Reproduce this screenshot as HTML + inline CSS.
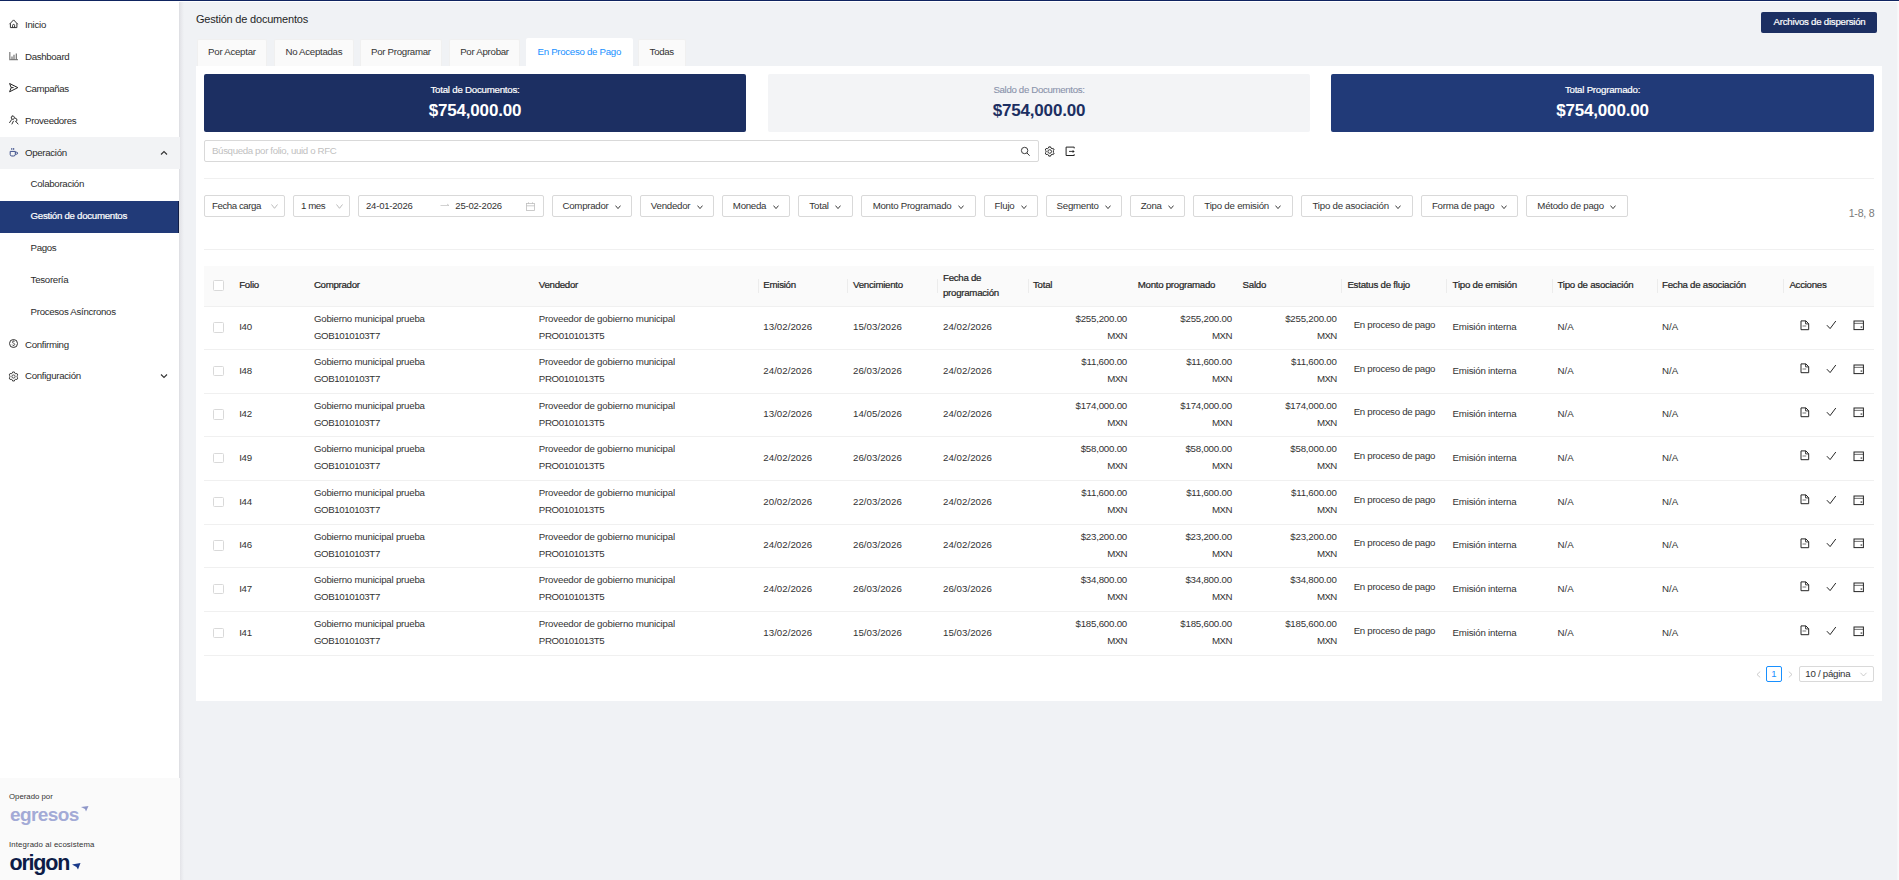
<!DOCTYPE html>
<html lang="es"><head><meta charset="utf-8"><title>Gestión de documentos</title>
<style>
html,body{margin:0;padding:0;}
body{width:1899px;height:880px;overflow:hidden;position:relative;background:#f0f2f5;font-family:"Liberation Sans",sans-serif;}
.b{position:absolute;}
.t{position:absolute;white-space:nowrap;}
.fl{display:flex;justify-content:center;align-items:flex-start;}
svg.b{overflow:visible;}
</style></head><body>
<div class="b" style="left:0px;top:0px;width:1899px;height:880px;background:#f0f2f5"></div>
<div class="b" style="left:0px;top:0px;width:179px;height:880px;background:#ffffff"></div>
<div class="b" style="left:179px;top:0px;width:5px;height:880px;background:linear-gradient(to right,#dcdde1,#e6e7eb 35%,#f0f2f5)"></div>
<div class="b" style="left:0px;top:778px;width:179.5px;height:102px;background:#fafafa"></div>
<div class="b" style="left:1897px;top:0px;width:2px;height:880px;background:linear-gradient(to right,#f4f5f7,#fbfbfc)"></div>
<div class="b" style="left:179px;top:1px;width:1720px;height:1px;background:#ffffff"></div>
<div class="b" style="left:0px;top:0px;width:1899px;height:1px;background:#0f2460"></div>
<div class="b" style="left:0px;top:137px;width:179.5px;height:32px;background:#f2f3f5"></div>
<div class="b" style="left:0px;top:201px;width:179px;height:32px;background:#213a78;border-right:1.5px solid #111d45;box-sizing:border-box"></div>
<div class="t " style="left:25px;top:17.60px;height:14px;line-height:14px;font-size:9.7px;font-weight:400;color:#2b2b2b;letter-spacing:-0.245px;">Inicio</div>
<div class="t " style="left:25px;top:49.60px;height:14px;line-height:14px;font-size:9.7px;font-weight:400;color:#2b2b2b;letter-spacing:-0.343px;">Dashboard</div>
<div class="t " style="left:25px;top:81.50px;height:14px;line-height:14px;font-size:9.7px;font-weight:400;color:#2b2b2b;letter-spacing:-0.381px;">Campañas</div>
<div class="t " style="left:25px;top:113.50px;height:14px;line-height:14px;font-size:9.7px;font-weight:400;color:#2b2b2b;letter-spacing:-0.325px;">Proveedores</div>
<div class="t " style="left:25px;top:145.50px;height:14px;line-height:14px;font-size:9.7px;font-weight:400;color:#2b2b2b;letter-spacing:-0.323px;">Operación</div>
<div class="t " style="left:30.6px;top:177.40px;height:14px;line-height:14px;font-size:9.7px;font-weight:400;color:#2b2b2b;letter-spacing:-0.31px;">Colaboración</div>
<div class="t " style="left:30.6px;top:241.40px;height:14px;line-height:14px;font-size:9.7px;font-weight:400;color:#2b2b2b;letter-spacing:-0.358px;">Pagos</div>
<div class="t " style="left:30.6px;top:273.40px;height:14px;line-height:14px;font-size:9.7px;font-weight:400;color:#2b2b2b;letter-spacing:-0.292px;">Tesorería</div>
<div class="t " style="left:30.6px;top:305.40px;height:14px;line-height:14px;font-size:9.7px;font-weight:400;color:#2b2b2b;letter-spacing:-0.312px;">Procesos Asíncronos</div>
<div class="t " style="left:25px;top:337.60px;height:14px;line-height:14px;font-size:9.7px;font-weight:400;color:#2b2b2b;letter-spacing:-0.305px;">Confirming</div>
<div class="t " style="left:25px;top:368.80px;height:14px;line-height:14px;font-size:9.7px;font-weight:400;color:#2b2b2b;letter-spacing:-0.299px;">Configuración</div>
<div class="t " style="left:30.6px;top:209.40px;height:14px;line-height:14px;font-size:9.7px;font-weight:400;color:#ffffff;letter-spacing:-0.283px;-webkit-text-stroke:0.2px #fff;">Gestión de documentos</div>
<svg class="b" style="left:9px;top:19px;color:#333" width="10" height="10" viewBox="0 0 10 10" fill="none" stroke="currentColor"><path d="M0.5 5.2 L4.6 0.9 L8.7 5.2 M1.4 4.4 V8.6 H7.9 V4.4 M3.6 8.6 V6.3 Q3.6 5.4 4.6 5.4 Q5.6 5.4 5.6 6.3 V8.6" stroke-width="1"/></svg>
<svg class="b" style="left:9px;top:51px;color:#333" width="10" height="10" viewBox="0 0 10 10" fill="none" stroke="currentColor"><path d="M0.8 1 V8.6 H9" stroke-width="1.3" style="opacity:.6"/><path d="M3 8.3 V5.6 M5 8.3 V3.8 M7.3 8.3 V2.6" stroke-width="1.1" style="opacity:.75"/></svg>
<svg class="b" style="left:9px;top:83px;color:#222" width="10" height="10" viewBox="0 0 10 10" fill="none" stroke="currentColor"><path d="M0.6 0.5 L8.8 4.6 L0.6 8.8 L2.2 4.6 Z M2.2 4.6 H4.6" stroke-width="1" stroke-linejoin="round"/></svg>
<svg class="b" style="left:9px;top:115px;color:#333" width="10" height="10" viewBox="0 0 10 10" fill="none" stroke="currentColor"><path d="M3.2 1 Q5 0.6 5.4 2.2 Q5.6 3.6 4.4 4.3 M3.2 1 Q1.8 1.6 2.3 3.2 Q2.7 4.2 3.8 4.4 M2.6 4.6 L0.6 7.6 M5.8 3 Q8 3.2 8 5 Q8 6 7 6.4 M4.4 6.2 L3 9 M6.6 6.2 L9 9" stroke-width="1" stroke-linecap="round"/></svg>
<svg class="b" style="left:9px;top:147px;color:#3d4f8a" width="10" height="10" viewBox="0 0 10 10" fill="none" stroke="currentColor"><path d="M1.2 4.4 H6.3 V7.4 Q6.3 9 4.7 9 H2.8 Q1.2 9 1.2 7.4 Z M6.3 5.2 H7.6 Q8.6 5.2 8.6 6.2 Q8.6 7.2 7.6 7.2 H6.3 M2.8 1 V2.9 M4.7 1 V2.9" stroke-width="1"/></svg>
<svg class="b" style="left:9px;top:339px;color:#333" width="10" height="10" viewBox="0 0 10 10" fill="none" stroke="currentColor"><circle cx="4.5" cy="4.5" r="4" stroke-width="1"/><path d="M5.6 2.8 Q5.3 2.2 4.5 2.2 Q3.4 2.2 3.4 3.1 Q3.4 3.9 4.5 4.2 Q5.7 4.5 5.7 5.4 Q5.7 6.4 4.5 6.4 Q3.5 6.4 3.2 5.7 M4.5 1.5 V2.2 M4.5 6.4 V7.2" stroke-width="0.8"/></svg>
<svg class="b" style="left:7.8px;top:371px;color:#3a3a3a" width="11" height="11" viewBox="0 0 11 11" fill="none" stroke="currentColor"><path d="M4.35 2.09 L4.59 0.99 L6.41 0.99 L6.65 2.09 L7.88 2.80 L8.95 2.46 L9.86 4.03 L9.03 4.79 L9.03 6.21 L9.86 6.97 L8.95 8.54 L7.88 8.20 L6.65 8.91 L6.41 10.01 L4.59 10.01 L4.35 8.91 L3.12 8.20 L2.05 8.54 L1.14 6.97 L1.97 6.21 L1.97 4.79 L1.14 4.03 L2.05 2.46 L3.12 2.80 Z" stroke-width="0.95" stroke-linejoin="round"/><circle cx="5.5" cy="5.5" r="1.6" stroke-width="0.9"/></svg>
<svg class="b" style="left:160px;top:150px;color:#333" width="8" height="6" viewBox="0 0 8 6" fill="none" stroke="currentColor"><path d="M1 4.5 L4 1.5 L7 4.5" stroke-width="1.1"/></svg>
<svg class="b" style="left:160px;top:373px;color:#333" width="8" height="6" viewBox="0 0 8 6" fill="none" stroke="currentColor"><path d="M1 1.5 L4 4.5 L7 1.5" stroke-width="1.1"/></svg>
<div class="t " style="left:9px;top:792.20px;height:10px;line-height:10px;font-size:7.8px;font-weight:400;color:#333;letter-spacing:0px;">Operado por</div>
<div class="t " style="left:9px;top:840.20px;height:10px;line-height:10px;font-size:7.8px;font-weight:400;color:#333;letter-spacing:0.12px;">Integrado al ecosistema</div>
<div class="t " style="left:10px;top:804.00px;height:22px;line-height:22px;font-size:19px;font-weight:700;color:#a3aad6;letter-spacing:-0.6px;font-family:"Liberation Sans",sans-serif;">egresos</div>
<svg class="b" style="left:81px;top:806px;" width="8" height="6" viewBox="0 0 8 6" fill="none" stroke="currentColor"><path d="M0 1 L7.5 0 L5 5.5 L4 3 Z" fill="#8d95c8" stroke="none"/></svg>
<div class="t " style="left:9.5px;top:850.70px;height:24px;line-height:24px;font-size:21.5px;font-weight:700;color:#0d1c47;letter-spacing:-1.2px;">origon</div>
<svg class="b" style="left:72px;top:863px;" width="9" height="7" viewBox="0 0 9 7" fill="none" stroke="currentColor"><path d="M0 1.5 L8.5 0 L6 6.5 L4.5 4 Z" fill="#1a3a8a" stroke="none"/></svg>
<div class="t " style="left:196px;top:10.50px;height:16px;line-height:16px;font-size:11px;font-weight:400;color:#1f1f1f;letter-spacing:-0.2px;">Gestión de documentos</div>
<div class="b" style="left:1761px;top:12px;width:116px;height:21px;background:#1c2f62;border-radius:2px"></div>
<div class="t" style="left:1519.5px;width:600px;text-align:center;top:14.50px;height:14px;line-height:14px;font-size:9.7px;font-weight:400;color:#fff;letter-spacing:-0.257px;-webkit-text-stroke:0.2px #fff;">Archivos de dispersión</div>
<div class="b" style="left:197px;top:38.6px;width:69.80000000000001px;height:27.4px;background:#fafafa;border:1px solid #f0f0f0;border-bottom:none;box-sizing:border-box;border-radius:2px 2px 0 0"></div>
<div class="t" style="left:-68.1px;width:600px;text-align:center;top:44.60px;height:14px;line-height:14px;font-size:9.7px;font-weight:400;color:#333;letter-spacing:-0.276px;">Por Aceptar</div>
<div class="b" style="left:273.7px;top:38.6px;width:80.30000000000001px;height:27.4px;background:#fafafa;border:1px solid #f0f0f0;border-bottom:none;box-sizing:border-box;border-radius:2px 2px 0 0"></div>
<div class="t" style="left:13.850000000000023px;width:600px;text-align:center;top:44.60px;height:14px;line-height:14px;font-size:9.7px;font-weight:400;color:#333;letter-spacing:-0.302px;">No Aceptadas</div>
<div class="b" style="left:359.8px;top:38.6px;width:82.19999999999999px;height:27.4px;background:#fafafa;border:1px solid #f0f0f0;border-bottom:none;box-sizing:border-box;border-radius:2px 2px 0 0"></div>
<div class="t" style="left:100.89999999999998px;width:600px;text-align:center;top:44.60px;height:14px;line-height:14px;font-size:9.7px;font-weight:400;color:#333;letter-spacing:-0.294px;">Por Programar</div>
<div class="b" style="left:449px;top:38.6px;width:71px;height:27.4px;background:#fafafa;border:1px solid #f0f0f0;border-bottom:none;box-sizing:border-box;border-radius:2px 2px 0 0"></div>
<div class="t" style="left:184.5px;width:600px;text-align:center;top:44.60px;height:14px;line-height:14px;font-size:9.7px;font-weight:400;color:#333;letter-spacing:-0.282px;">Por Aprobar</div>
<div class="b" style="left:526px;top:38px;width:106.5px;height:28px;background:#fff;border-radius:2px 2px 0 0"></div>
<div class="t" style="left:279.25px;width:600px;text-align:center;top:44.60px;height:14px;line-height:14px;font-size:9.7px;font-weight:400;color:#1890ff;letter-spacing:-0.297px;">En Proceso de Pago</div>
<div class="b" style="left:638px;top:38.6px;width:47.5px;height:27.4px;background:#fafafa;border:1px solid #f0f0f0;border-bottom:none;box-sizing:border-box;border-radius:2px 2px 0 0"></div>
<div class="t" style="left:361.75px;width:600px;text-align:center;top:44.60px;height:14px;line-height:14px;font-size:9.7px;font-weight:400;color:#333;letter-spacing:-0.311px;">Todas</div>
<div class="b" style="left:196px;top:66px;width:1686px;height:635px;background:#fff"></div>
<div class="b" style="left:204px;top:74px;width:542px;height:58px;background:#1c2f62;border-radius:2px"></div>
<div class="t" style="left:175px;width:600px;text-align:center;top:82.80px;height:14px;line-height:14px;font-size:9.7px;font-weight:400;color:#fff;letter-spacing:-0.235px;-webkit-text-stroke:0.2px #fff;">Total de Documentos:</div>
<div class="t" style="left:175px;width:600px;text-align:center;top:99.80px;height:22px;line-height:22px;font-size:17px;font-weight:700;color:#fff;letter-spacing:-0.2px;">$754,000.00</div>
<div class="b" style="left:768px;top:74px;width:542px;height:58px;background:#f3f4f6;border-radius:2px"></div>
<div class="t" style="left:739px;width:600px;text-align:center;top:82.80px;height:14px;line-height:14px;font-size:9.7px;font-weight:400;color:#8a93ab;letter-spacing:-0.343px;-webkit-text-stroke:0.1px #8a93ab;">Saldo de Documentos:</div>
<div class="t" style="left:739px;width:600px;text-align:center;top:99.80px;height:22px;line-height:22px;font-size:17px;font-weight:700;color:#1c2f62;letter-spacing:-0.2px;">$754,000.00</div>
<div class="b" style="left:1331px;top:74px;width:543px;height:58px;background:#213a78;border-radius:2px"></div>
<div class="t" style="left:1302.5px;width:600px;text-align:center;top:82.80px;height:14px;line-height:14px;font-size:9.7px;font-weight:400;color:#fff;letter-spacing:-0.233px;-webkit-text-stroke:0.2px #fff;">Total Programado:</div>
<div class="t" style="left:1302.5px;width:600px;text-align:center;top:99.80px;height:22px;line-height:22px;font-size:17px;font-weight:700;color:#fff;letter-spacing:-0.2px;">$754,000.00</div>
<div class="b" style="left:204px;top:140px;width:835px;height:22px;border:1px solid #d9d9d9;border-radius:2px;box-sizing:border-box;background:#fff"></div>
<div class="t " style="left:212px;top:143.50px;height:14px;line-height:14px;font-size:9.7px;font-weight:400;color:#bfbfbf;letter-spacing:-0.361px;">Búsqueda por folio, uuid o RFC</div>
<svg class="b" style="left:1020px;top:146px;color:#333" width="11" height="11" viewBox="0 0 11 11" fill="none" stroke="currentColor"><circle cx="4.6" cy="4.5" r="3.2" stroke-width="0.95"/><path d="M6.9 6.9 L9.6 9.7" stroke-width="1"/></svg>
<svg class="b" style="left:1043.5px;top:145.5px;color:#2a2a2a" width="11" height="11" viewBox="0 0 11 11" fill="none" stroke="currentColor"><path d="M4.52 1.99 L4.77 0.89 L6.63 0.89 L6.88 1.99 L8.15 2.72 L9.23 2.39 L10.15 4.00 L9.33 4.77 L9.33 6.23 L10.15 7.00 L9.23 8.61 L8.15 8.28 L6.88 9.01 L6.63 10.11 L4.77 10.11 L4.52 9.01 L3.25 8.28 L2.17 8.61 L1.25 7.00 L2.07 6.23 L2.07 4.77 L1.25 4.00 L2.17 2.39 L3.25 2.72 Z" stroke-width="1" stroke-linejoin="round"/><circle cx="5.7" cy="5.5" r="1.8" stroke-width="0.95"/></svg>
<svg class="b" style="left:1065px;top:146px;color:#222" width="11" height="11" viewBox="0 0 11 11" fill="none" stroke="currentColor"><path d="M9.2 2.4 V1.1 H1.1 V9.5 H9.2 V8.2" stroke-width="1"/><path d="M4 5.4 H9" stroke-width="0.9"/><path d="M7.6 3.9 L9.7 5.4 L7.6 6.9 Z" fill="currentColor" stroke="none"/></svg>
<div class="b" style="left:204px;top:178px;width:1670px;height:1px;background:#f0f0f0"></div>
<div class="b" style="left:204px;top:249px;width:1670px;height:1px;background:#f0f0f0"></div>
<div class="b" style="left:204px;top:195px;width:81px;height:22px;border:1px solid #d9d9d9;border-radius:2px;box-sizing:border-box;background:#fff"></div>
<div class="t " style="left:212px;top:198.60px;height:14px;line-height:14px;font-size:9.7px;font-weight:400;color:#333;letter-spacing:-0.441px;">Fecha carga</div>
<svg class="b" style="left:271px;top:203.6px;color:#b0b0b0" width="7" height="5" viewBox="0 0 7 5" fill="none" stroke="currentColor"><path d="M0.5 0.5 L3.5 4.3 L6.5 0.5" stroke-width="0.85"/></svg>
<div class="b" style="left:293px;top:195px;width:57px;height:22px;border:1px solid #d9d9d9;border-radius:2px;box-sizing:border-box;background:#fff"></div>
<div class="t " style="left:301px;top:198.60px;height:14px;line-height:14px;font-size:9.7px;font-weight:400;color:#333;letter-spacing:-0.475px;">1 mes</div>
<svg class="b" style="left:336px;top:203.6px;color:#b0b0b0" width="7" height="5" viewBox="0 0 7 5" fill="none" stroke="currentColor"><path d="M0.5 0.5 L3.5 4.3 L6.5 0.5" stroke-width="0.85"/></svg>
<div class="b" style="left:552px;top:195px;width:79.5px;height:22px;border:1px solid #d9d9d9;border-radius:2px;box-sizing:border-box;background:#fff"></div>
<div class="b fl" style="left:552px;top:198.6px;width:79.5px;height:14px;"><span style="font-size:9.7px;letter-spacing:-0.27px;color:#333;line-height:14px">Comprador</span><svg width="6" height="5" viewBox="0 0 6 5" fill="none" stroke="#333" style="margin-left:6.5px;margin-top:6px"><path d="M0.5 0.6 L3 3.6 L5.5 0.6" stroke-width="0.95"/></svg></div>
<div class="b" style="left:640px;top:195px;width:73.60000000000002px;height:22px;border:1px solid #d9d9d9;border-radius:2px;box-sizing:border-box;background:#fff"></div>
<div class="b fl" style="left:640px;top:198.6px;width:73.60000000000002px;height:14px;"><span style="font-size:9.7px;letter-spacing:-0.26px;color:#333;line-height:14px">Vendedor</span><svg width="6" height="5" viewBox="0 0 6 5" fill="none" stroke="#333" style="margin-left:6.5px;margin-top:6px"><path d="M0.5 0.6 L3 3.6 L5.5 0.6" stroke-width="0.95"/></svg></div>
<div class="b" style="left:722px;top:195px;width:67.5px;height:22px;border:1px solid #d9d9d9;border-radius:2px;box-sizing:border-box;background:#fff"></div>
<div class="b fl" style="left:722px;top:198.6px;width:67.5px;height:14px;"><span style="font-size:9.7px;letter-spacing:-0.292px;color:#333;line-height:14px">Moneda</span><svg width="6" height="5" viewBox="0 0 6 5" fill="none" stroke="#333" style="margin-left:6.5px;margin-top:6px"><path d="M0.5 0.6 L3 3.6 L5.5 0.6" stroke-width="0.95"/></svg></div>
<div class="b" style="left:798px;top:195px;width:54.60000000000002px;height:22px;border:1px solid #d9d9d9;border-radius:2px;box-sizing:border-box;background:#fff"></div>
<div class="b fl" style="left:798px;top:198.6px;width:54.60000000000002px;height:14px;"><span style="font-size:9.7px;letter-spacing:-0.205px;color:#333;line-height:14px">Total</span><svg width="6" height="5" viewBox="0 0 6 5" fill="none" stroke="#333" style="margin-left:6.5px;margin-top:6px"><path d="M0.5 0.6 L3 3.6 L5.5 0.6" stroke-width="0.95"/></svg></div>
<div class="b" style="left:861px;top:195px;width:114.60000000000002px;height:22px;border:1px solid #d9d9d9;border-radius:2px;box-sizing:border-box;background:#fff"></div>
<div class="b fl" style="left:861px;top:198.6px;width:114.60000000000002px;height:14px;"><span style="font-size:9.7px;letter-spacing:-0.259px;color:#333;line-height:14px">Monto Programado</span><svg width="6" height="5" viewBox="0 0 6 5" fill="none" stroke="#333" style="margin-left:6.5px;margin-top:6px"><path d="M0.5 0.6 L3 3.6 L5.5 0.6" stroke-width="0.95"/></svg></div>
<div class="b" style="left:984px;top:195px;width:53.59999999999991px;height:22px;border:1px solid #d9d9d9;border-radius:2px;box-sizing:border-box;background:#fff"></div>
<div class="b fl" style="left:984px;top:198.6px;width:53.59999999999991px;height:14px;"><span style="font-size:9.7px;letter-spacing:-0.21px;color:#333;line-height:14px">Flujo</span><svg width="6" height="5" viewBox="0 0 6 5" fill="none" stroke="#333" style="margin-left:6.5px;margin-top:6px"><path d="M0.5 0.6 L3 3.6 L5.5 0.6" stroke-width="0.95"/></svg></div>
<div class="b" style="left:1046px;top:195px;width:75.70000000000005px;height:22px;border:1px solid #d9d9d9;border-radius:2px;box-sizing:border-box;background:#fff"></div>
<div class="b fl" style="left:1046px;top:198.6px;width:75.70000000000005px;height:14px;"><span style="font-size:9.7px;letter-spacing:-0.276px;color:#333;line-height:14px">Segmento</span><svg width="6" height="5" viewBox="0 0 6 5" fill="none" stroke="#333" style="margin-left:6.5px;margin-top:6px"><path d="M0.5 0.6 L3 3.6 L5.5 0.6" stroke-width="0.95"/></svg></div>
<div class="b" style="left:1130px;top:195px;width:54.799999999999955px;height:22px;border:1px solid #d9d9d9;border-radius:2px;box-sizing:border-box;background:#fff"></div>
<div class="b fl" style="left:1130px;top:198.6px;width:54.799999999999955px;height:14px;"><span style="font-size:9.7px;letter-spacing:-0.276px;color:#333;line-height:14px">Zona</span><svg width="6" height="5" viewBox="0 0 6 5" fill="none" stroke="#333" style="margin-left:6.5px;margin-top:6px"><path d="M0.5 0.6 L3 3.6 L5.5 0.6" stroke-width="0.95"/></svg></div>
<div class="b" style="left:1193px;top:195px;width:99.79999999999995px;height:22px;border:1px solid #d9d9d9;border-radius:2px;box-sizing:border-box;background:#fff"></div>
<div class="b fl" style="left:1193px;top:198.6px;width:99.79999999999995px;height:14px;"><span style="font-size:9.7px;letter-spacing:-0.227px;color:#333;line-height:14px">Tipo de emisión</span><svg width="6" height="5" viewBox="0 0 6 5" fill="none" stroke="#333" style="margin-left:6.5px;margin-top:6px"><path d="M0.5 0.6 L3 3.6 L5.5 0.6" stroke-width="0.95"/></svg></div>
<div class="b" style="left:1301px;top:195px;width:111.79999999999995px;height:22px;border:1px solid #d9d9d9;border-radius:2px;box-sizing:border-box;background:#fff"></div>
<div class="b fl" style="left:1301px;top:198.6px;width:111.79999999999995px;height:14px;"><span style="font-size:9.7px;letter-spacing:-0.224px;color:#333;line-height:14px">Tipo de asociación</span><svg width="6" height="5" viewBox="0 0 6 5" fill="none" stroke="#333" style="margin-left:6.5px;margin-top:6px"><path d="M0.5 0.6 L3 3.6 L5.5 0.6" stroke-width="0.95"/></svg></div>
<div class="b" style="left:1421px;top:195px;width:96.70000000000005px;height:22px;border:1px solid #d9d9d9;border-radius:2px;box-sizing:border-box;background:#fff"></div>
<div class="b fl" style="left:1421px;top:198.6px;width:96.70000000000005px;height:14px;"><span style="font-size:9.7px;letter-spacing:-0.253px;color:#333;line-height:14px">Forma de pago</span><svg width="6" height="5" viewBox="0 0 6 5" fill="none" stroke="#333" style="margin-left:6.5px;margin-top:6px"><path d="M0.5 0.6 L3 3.6 L5.5 0.6" stroke-width="0.95"/></svg></div>
<div class="b" style="left:1526px;top:195px;width:101.70000000000005px;height:22px;border:1px solid #d9d9d9;border-radius:2px;box-sizing:border-box;background:#fff"></div>
<div class="b fl" style="left:1526px;top:198.6px;width:101.70000000000005px;height:14px;"><span style="font-size:9.7px;letter-spacing:-0.25px;color:#333;line-height:14px">Método de pago</span><svg width="6" height="5" viewBox="0 0 6 5" fill="none" stroke="#333" style="margin-left:6.5px;margin-top:6px"><path d="M0.5 0.6 L3 3.6 L5.5 0.6" stroke-width="0.95"/></svg></div>
<div class="b" style="left:358px;top:195px;width:186px;height:22px;border:1px solid #d9d9d9;border-radius:2px;box-sizing:border-box;background:#fff"></div>
<div class="t " style="left:366px;top:198.60px;height:14px;line-height:14px;font-size:9.5px;font-weight:400;color:#333;letter-spacing:-0.2px;">24-01-2026</div>
<div class="t " style="left:455.3px;top:198.60px;height:14px;line-height:14px;font-size:9.5px;font-weight:400;color:#333;letter-spacing:-0.2px;">25-02-2026</div>
<svg class="b" style="left:440px;top:203px;color:#bfbfbf" width="10" height="5" viewBox="0 0 10 5" fill="none" stroke="currentColor"><path d="M0.5 2.5 H9 M7 1 L9 2.5" stroke-width="0.7"/></svg>
<svg class="b" style="left:526px;top:201.5px;color:#bfbfbf" width="9" height="9" viewBox="0 0 9 9" fill="none" stroke="currentColor"><rect x="0.5" y="1.5" width="8" height="7" stroke-width="0.8"/><path d="M0.5 3.8 H8.5 M2.5 0.3 V2 M6.5 0.3 V2" stroke-width="0.8"/></svg>
<div class="t" style="right:24.700000000000045px;top:206.10px;height:14px;line-height:14px;font-size:10.6px;font-weight:400;color:#7a7a7a;letter-spacing:-0.25px;text-align:right;">1-8, 8</div>
<div class="b" style="left:204px;top:266px;width:1670px;height:40.5px;background:#fafafa"></div>
<div class="b" style="left:204px;top:306px;width:1670px;height:1px;background:#f0f0f0"></div>
<div class="b" style="left:213.3px;top:280.2px;width:10.5px;height:10.5px;border:1px solid #d9d9d9;border-radius:1.5px;box-sizing:border-box;background:#fff"></div>
<div class="t " style="left:239.2px;top:278.20px;height:14px;line-height:14px;font-size:9.7px;font-weight:400;color:#262626;letter-spacing:-0.231px;-webkit-text-stroke:0.22px currentColor;">Folio</div>
<div class="t " style="left:313.9px;top:278.20px;height:14px;line-height:14px;font-size:9.7px;font-weight:400;color:#262626;letter-spacing:-0.297px;-webkit-text-stroke:0.22px currentColor;">Comprador</div>
<div class="t " style="left:538.8px;top:278.20px;height:14px;line-height:14px;font-size:9.7px;font-weight:400;color:#262626;letter-spacing:-0.286px;-webkit-text-stroke:0.22px currentColor;">Vendedor</div>
<div class="t " style="left:763.3px;top:278.20px;height:14px;line-height:14px;font-size:9.7px;font-weight:400;color:#262626;letter-spacing:-0.271px;-webkit-text-stroke:0.22px currentColor;">Emisión</div>
<div class="t " style="left:853px;top:278.20px;height:14px;line-height:14px;font-size:9.7px;font-weight:400;color:#262626;letter-spacing:-0.264px;-webkit-text-stroke:0.22px currentColor;">Vencimiento</div>
<div class="t " style="left:1032.9px;top:278.20px;height:14px;line-height:14px;font-size:9.7px;font-weight:400;color:#262626;letter-spacing:-0.225px;-webkit-text-stroke:0.22px currentColor;">Total</div>
<div class="t " style="left:1137.8px;top:278.20px;height:14px;line-height:14px;font-size:9.7px;font-weight:400;color:#262626;letter-spacing:-0.282px;-webkit-text-stroke:0.22px currentColor;">Monto programado</div>
<div class="t " style="left:1242.6px;top:278.20px;height:14px;line-height:14px;font-size:9.7px;font-weight:400;color:#262626;letter-spacing:-0.273px;-webkit-text-stroke:0.22px currentColor;">Saldo</div>
<div class="t " style="left:1347.4px;top:278.20px;height:14px;line-height:14px;font-size:9.7px;font-weight:400;color:#262626;letter-spacing:-0.228px;-webkit-text-stroke:0.22px currentColor;">Estatus de flujo</div>
<div class="t " style="left:1452.6px;top:278.20px;height:14px;line-height:14px;font-size:9.7px;font-weight:400;color:#262626;letter-spacing:-0.25px;-webkit-text-stroke:0.22px currentColor;">Tipo de emisión</div>
<div class="t " style="left:1557.5px;top:278.20px;height:14px;line-height:14px;font-size:9.7px;font-weight:400;color:#262626;letter-spacing:-0.246px;-webkit-text-stroke:0.22px currentColor;">Tipo de asociación</div>
<div class="t " style="left:1662px;top:278.20px;height:14px;line-height:14px;font-size:9.7px;font-weight:400;color:#262626;letter-spacing:-0.258px;-webkit-text-stroke:0.22px currentColor;">Fecha de asociación</div>
<div class="t " style="left:1789.4px;top:278.20px;height:14px;line-height:14px;font-size:9.7px;font-weight:400;color:#262626;letter-spacing:-0.271px;-webkit-text-stroke:0.22px currentColor;">Acciones</div>
<div class="t " style="left:943px;top:270.60px;height:14px;line-height:14px;font-size:9.7px;font-weight:400;color:#262626;letter-spacing:-0.278px;-webkit-text-stroke:0.22px currentColor;">Fecha de</div>
<div class="t " style="left:943px;top:285.50px;height:14px;line-height:14px;font-size:9.7px;font-weight:400;color:#262626;letter-spacing:-0.272px;-webkit-text-stroke:0.22px currentColor;">programación</div>
<div class="b" style="left:757.9px;top:278.5px;width:1px;height:14px;background:#ececec"></div>
<div class="b" style="left:847.3px;top:278.5px;width:1px;height:14px;background:#ececec"></div>
<div class="b" style="left:937.4px;top:278.5px;width:1px;height:14px;background:#ececec"></div>
<div class="b" style="left:1027.5px;top:278.5px;width:1px;height:14px;background:#ececec"></div>
<div class="b" style="left:1341.4px;top:278.5px;width:1px;height:14px;background:#ececec"></div>
<div class="b" style="left:1446.3px;top:278.5px;width:1px;height:14px;background:#ececec"></div>
<div class="b" style="left:1551.8px;top:278.5px;width:1px;height:14px;background:#ececec"></div>
<div class="b" style="left:1656.6px;top:278.5px;width:1px;height:14px;background:#ececec"></div>
<div class="b" style="left:1783.4px;top:278.5px;width:1px;height:14px;background:#ececec"></div>
<div class="b" style="left:204px;top:349px;width:1670px;height:1px;background:#f0f0f0"></div>
<div class="b" style="left:213.3px;top:322.4px;width:10.5px;height:10.5px;border:1px solid #d9d9d9;border-radius:1.5px;box-sizing:border-box;background:#fff"></div>
<div class="t " style="left:239.2px;top:320.20px;height:14px;line-height:14px;font-size:9.7px;font-weight:400;color:#333333;letter-spacing:-0.295px;">I40</div>
<div class="t " style="left:313.9px;top:311.80px;height:14px;line-height:14px;font-size:9.7px;font-weight:400;color:#333333;letter-spacing:-0.219px;">Gobierno municipal prueba</div>
<div class="t " style="left:313.9px;top:328.90px;height:14px;line-height:14px;font-size:9.7px;font-weight:400;color:#333333;letter-spacing:-0.378px;">GOB1010103T7</div>
<div class="t " style="left:538.8px;top:311.80px;height:14px;line-height:14px;font-size:9.7px;font-weight:400;color:#333333;letter-spacing:-0.195px;">Proveedor de gobierno municipal</div>
<div class="t " style="left:538.8px;top:328.90px;height:14px;line-height:14px;font-size:9.7px;font-weight:400;color:#333333;letter-spacing:-0.383px;">PRO0101013T5</div>
<div class="t " style="left:763.3px;top:320.20px;height:14px;line-height:14px;font-size:9.7px;font-weight:400;color:#333333;letter-spacing:0.035px;">13/02/2026</div>
<div class="t " style="left:853px;top:320.20px;height:14px;line-height:14px;font-size:9.7px;font-weight:400;color:#333333;letter-spacing:0.035px;">15/03/2026</div>
<div class="t " style="left:943px;top:320.20px;height:14px;line-height:14px;font-size:9.7px;font-weight:400;color:#333333;letter-spacing:0.035px;">24/02/2026</div>
<div class="t" style="right:772px;top:311.80px;height:14px;line-height:14px;font-size:9.7px;font-weight:400;color:#333333;letter-spacing:-0.213px;text-align:right;">$255,200.00</div>
<div class="t" style="right:772px;top:328.90px;height:14px;line-height:14px;font-size:9.7px;font-weight:400;color:#333333;letter-spacing:-0.585px;text-align:right;">MXN</div>
<div class="t" style="right:667.2px;top:311.80px;height:14px;line-height:14px;font-size:9.7px;font-weight:400;color:#333333;letter-spacing:-0.213px;text-align:right;">$255,200.00</div>
<div class="t" style="right:667.2px;top:328.90px;height:14px;line-height:14px;font-size:9.7px;font-weight:400;color:#333333;letter-spacing:-0.585px;text-align:right;">MXN</div>
<div class="t" style="right:562.3px;top:311.80px;height:14px;line-height:14px;font-size:9.7px;font-weight:400;color:#333333;letter-spacing:-0.213px;text-align:right;">$255,200.00</div>
<div class="t" style="right:562.3px;top:328.90px;height:14px;line-height:14px;font-size:9.7px;font-weight:400;color:#333333;letter-spacing:-0.585px;text-align:right;">MXN</div>
<div class="t " style="left:1353.7px;top:318.40px;height:14px;line-height:14px;font-size:9.7px;font-weight:400;color:#333333;letter-spacing:-0.296px;">En proceso de pago</div>
<div class="t " style="left:1452.6px;top:320.20px;height:14px;line-height:14px;font-size:9.7px;font-weight:400;color:#333333;letter-spacing:-0.203px;">Emisión interna</div>
<div class="t " style="left:1557.5px;top:320.20px;height:14px;line-height:14px;font-size:9.7px;font-weight:400;color:#333333;letter-spacing:0.01px;">N/A</div>
<div class="t " style="left:1662px;top:320.20px;height:14px;line-height:14px;font-size:9.7px;font-weight:400;color:#333333;letter-spacing:0.01px;">N/A</div>
<svg class="b" style="left:1799.5px;top:319.5px;color:#262626" width="10" height="11" viewBox="0 0 10 11" fill="none" stroke="currentColor"><path d="M1 0.9 H5.9 L8.7 3.7 V9.7 H1 Z" stroke-width="1" stroke-linejoin="miter"/><path d="M5.6 0.9 V3.9 H8.7" stroke-width="0.9"/><path d="M2.5 6 H6.2" stroke-width="0.9" style="opacity:.7"/></svg>
<svg class="b" style="left:1826px;top:320.0px;color:#262626" width="11" height="10" viewBox="0 0 11 10" fill="none" stroke="currentColor"><path d="M0.9 5.2 L4.1 8.6 L9.8 1" stroke-width="1"/></svg>
<svg class="b" style="left:1852.5px;top:320.0px;color:#262626" width="11" height="10" viewBox="0 0 11 10" fill="none" stroke="currentColor"><rect x="1" y="1" width="9.4" height="8.6" stroke-width="1"/><path d="M1 3.4 H10.4" stroke-width="1.1" style="opacity:.6"/><rect x="7.6" y="6.5" width="1.6" height="1.1" fill="currentColor" stroke="none"/></svg>
<div class="b" style="left:204px;top:393px;width:1670px;height:1px;background:#f0f0f0"></div>
<div class="b" style="left:213.3px;top:365.9px;width:10.5px;height:10.5px;border:1px solid #d9d9d9;border-radius:1.5px;box-sizing:border-box;background:#fff"></div>
<div class="t " style="left:239.2px;top:363.70px;height:14px;line-height:14px;font-size:9.7px;font-weight:400;color:#333333;letter-spacing:-0.295px;">I48</div>
<div class="t " style="left:313.9px;top:355.30px;height:14px;line-height:14px;font-size:9.7px;font-weight:400;color:#333333;letter-spacing:-0.219px;">Gobierno municipal prueba</div>
<div class="t " style="left:313.9px;top:372.40px;height:14px;line-height:14px;font-size:9.7px;font-weight:400;color:#333333;letter-spacing:-0.378px;">GOB1010103T7</div>
<div class="t " style="left:538.8px;top:355.30px;height:14px;line-height:14px;font-size:9.7px;font-weight:400;color:#333333;letter-spacing:-0.195px;">Proveedor de gobierno municipal</div>
<div class="t " style="left:538.8px;top:372.40px;height:14px;line-height:14px;font-size:9.7px;font-weight:400;color:#333333;letter-spacing:-0.383px;">PRO0101013T5</div>
<div class="t " style="left:763.3px;top:363.70px;height:14px;line-height:14px;font-size:9.7px;font-weight:400;color:#333333;letter-spacing:0.035px;">24/02/2026</div>
<div class="t " style="left:853px;top:363.70px;height:14px;line-height:14px;font-size:9.7px;font-weight:400;color:#333333;letter-spacing:0.035px;">26/03/2026</div>
<div class="t " style="left:943px;top:363.70px;height:14px;line-height:14px;font-size:9.7px;font-weight:400;color:#333333;letter-spacing:0.035px;">24/02/2026</div>
<div class="t" style="right:772px;top:355.30px;height:14px;line-height:14px;font-size:9.7px;font-weight:400;color:#333333;letter-spacing:-0.208px;text-align:right;">$11,600.00</div>
<div class="t" style="right:772px;top:372.40px;height:14px;line-height:14px;font-size:9.7px;font-weight:400;color:#333333;letter-spacing:-0.585px;text-align:right;">MXN</div>
<div class="t" style="right:667.2px;top:355.30px;height:14px;line-height:14px;font-size:9.7px;font-weight:400;color:#333333;letter-spacing:-0.208px;text-align:right;">$11,600.00</div>
<div class="t" style="right:667.2px;top:372.40px;height:14px;line-height:14px;font-size:9.7px;font-weight:400;color:#333333;letter-spacing:-0.585px;text-align:right;">MXN</div>
<div class="t" style="right:562.3px;top:355.30px;height:14px;line-height:14px;font-size:9.7px;font-weight:400;color:#333333;letter-spacing:-0.208px;text-align:right;">$11,600.00</div>
<div class="t" style="right:562.3px;top:372.40px;height:14px;line-height:14px;font-size:9.7px;font-weight:400;color:#333333;letter-spacing:-0.585px;text-align:right;">MXN</div>
<div class="t " style="left:1353.7px;top:361.90px;height:14px;line-height:14px;font-size:9.7px;font-weight:400;color:#333333;letter-spacing:-0.296px;">En proceso de pago</div>
<div class="t " style="left:1452.6px;top:363.70px;height:14px;line-height:14px;font-size:9.7px;font-weight:400;color:#333333;letter-spacing:-0.203px;">Emisión interna</div>
<div class="t " style="left:1557.5px;top:363.70px;height:14px;line-height:14px;font-size:9.7px;font-weight:400;color:#333333;letter-spacing:0.01px;">N/A</div>
<div class="t " style="left:1662px;top:363.70px;height:14px;line-height:14px;font-size:9.7px;font-weight:400;color:#333333;letter-spacing:0.01px;">N/A</div>
<svg class="b" style="left:1799.5px;top:363.0px;color:#262626" width="10" height="11" viewBox="0 0 10 11" fill="none" stroke="currentColor"><path d="M1 0.9 H5.9 L8.7 3.7 V9.7 H1 Z" stroke-width="1" stroke-linejoin="miter"/><path d="M5.6 0.9 V3.9 H8.7" stroke-width="0.9"/><path d="M2.5 6 H6.2" stroke-width="0.9" style="opacity:.7"/></svg>
<svg class="b" style="left:1826px;top:363.5px;color:#262626" width="11" height="10" viewBox="0 0 11 10" fill="none" stroke="currentColor"><path d="M0.9 5.2 L4.1 8.6 L9.8 1" stroke-width="1"/></svg>
<svg class="b" style="left:1852.5px;top:363.5px;color:#262626" width="11" height="10" viewBox="0 0 11 10" fill="none" stroke="currentColor"><rect x="1" y="1" width="9.4" height="8.6" stroke-width="1"/><path d="M1 3.4 H10.4" stroke-width="1.1" style="opacity:.6"/><rect x="7.6" y="6.5" width="1.6" height="1.1" fill="currentColor" stroke="none"/></svg>
<div class="b" style="left:204px;top:436px;width:1670px;height:1px;background:#f0f0f0"></div>
<div class="b" style="left:213.3px;top:409.4px;width:10.5px;height:10.5px;border:1px solid #d9d9d9;border-radius:1.5px;box-sizing:border-box;background:#fff"></div>
<div class="t " style="left:239.2px;top:407.20px;height:14px;line-height:14px;font-size:9.7px;font-weight:400;color:#333333;letter-spacing:-0.295px;">I42</div>
<div class="t " style="left:313.9px;top:398.80px;height:14px;line-height:14px;font-size:9.7px;font-weight:400;color:#333333;letter-spacing:-0.219px;">Gobierno municipal prueba</div>
<div class="t " style="left:313.9px;top:415.90px;height:14px;line-height:14px;font-size:9.7px;font-weight:400;color:#333333;letter-spacing:-0.378px;">GOB1010103T7</div>
<div class="t " style="left:538.8px;top:398.80px;height:14px;line-height:14px;font-size:9.7px;font-weight:400;color:#333333;letter-spacing:-0.195px;">Proveedor de gobierno municipal</div>
<div class="t " style="left:538.8px;top:415.90px;height:14px;line-height:14px;font-size:9.7px;font-weight:400;color:#333333;letter-spacing:-0.383px;">PRO0101013T5</div>
<div class="t " style="left:763.3px;top:407.20px;height:14px;line-height:14px;font-size:9.7px;font-weight:400;color:#333333;letter-spacing:0.035px;">13/02/2026</div>
<div class="t " style="left:853px;top:407.20px;height:14px;line-height:14px;font-size:9.7px;font-weight:400;color:#333333;letter-spacing:0.035px;">14/05/2026</div>
<div class="t " style="left:943px;top:407.20px;height:14px;line-height:14px;font-size:9.7px;font-weight:400;color:#333333;letter-spacing:0.035px;">24/02/2026</div>
<div class="t" style="right:772px;top:398.80px;height:14px;line-height:14px;font-size:9.7px;font-weight:400;color:#333333;letter-spacing:-0.213px;text-align:right;">$174,000.00</div>
<div class="t" style="right:772px;top:415.90px;height:14px;line-height:14px;font-size:9.7px;font-weight:400;color:#333333;letter-spacing:-0.585px;text-align:right;">MXN</div>
<div class="t" style="right:667.2px;top:398.80px;height:14px;line-height:14px;font-size:9.7px;font-weight:400;color:#333333;letter-spacing:-0.213px;text-align:right;">$174,000.00</div>
<div class="t" style="right:667.2px;top:415.90px;height:14px;line-height:14px;font-size:9.7px;font-weight:400;color:#333333;letter-spacing:-0.585px;text-align:right;">MXN</div>
<div class="t" style="right:562.3px;top:398.80px;height:14px;line-height:14px;font-size:9.7px;font-weight:400;color:#333333;letter-spacing:-0.213px;text-align:right;">$174,000.00</div>
<div class="t" style="right:562.3px;top:415.90px;height:14px;line-height:14px;font-size:9.7px;font-weight:400;color:#333333;letter-spacing:-0.585px;text-align:right;">MXN</div>
<div class="t " style="left:1353.7px;top:405.40px;height:14px;line-height:14px;font-size:9.7px;font-weight:400;color:#333333;letter-spacing:-0.296px;">En proceso de pago</div>
<div class="t " style="left:1452.6px;top:407.20px;height:14px;line-height:14px;font-size:9.7px;font-weight:400;color:#333333;letter-spacing:-0.203px;">Emisión interna</div>
<div class="t " style="left:1557.5px;top:407.20px;height:14px;line-height:14px;font-size:9.7px;font-weight:400;color:#333333;letter-spacing:0.01px;">N/A</div>
<div class="t " style="left:1662px;top:407.20px;height:14px;line-height:14px;font-size:9.7px;font-weight:400;color:#333333;letter-spacing:0.01px;">N/A</div>
<svg class="b" style="left:1799.5px;top:406.5px;color:#262626" width="10" height="11" viewBox="0 0 10 11" fill="none" stroke="currentColor"><path d="M1 0.9 H5.9 L8.7 3.7 V9.7 H1 Z" stroke-width="1" stroke-linejoin="miter"/><path d="M5.6 0.9 V3.9 H8.7" stroke-width="0.9"/><path d="M2.5 6 H6.2" stroke-width="0.9" style="opacity:.7"/></svg>
<svg class="b" style="left:1826px;top:407.0px;color:#262626" width="11" height="10" viewBox="0 0 11 10" fill="none" stroke="currentColor"><path d="M0.9 5.2 L4.1 8.6 L9.8 1" stroke-width="1"/></svg>
<svg class="b" style="left:1852.5px;top:407.0px;color:#262626" width="11" height="10" viewBox="0 0 11 10" fill="none" stroke="currentColor"><rect x="1" y="1" width="9.4" height="8.6" stroke-width="1"/><path d="M1 3.4 H10.4" stroke-width="1.1" style="opacity:.6"/><rect x="7.6" y="6.5" width="1.6" height="1.1" fill="currentColor" stroke="none"/></svg>
<div class="b" style="left:204px;top:480px;width:1670px;height:1px;background:#f0f0f0"></div>
<div class="b" style="left:213.3px;top:452.9px;width:10.5px;height:10.5px;border:1px solid #d9d9d9;border-radius:1.5px;box-sizing:border-box;background:#fff"></div>
<div class="t " style="left:239.2px;top:450.70px;height:14px;line-height:14px;font-size:9.7px;font-weight:400;color:#333333;letter-spacing:-0.295px;">I49</div>
<div class="t " style="left:313.9px;top:442.30px;height:14px;line-height:14px;font-size:9.7px;font-weight:400;color:#333333;letter-spacing:-0.219px;">Gobierno municipal prueba</div>
<div class="t " style="left:313.9px;top:459.40px;height:14px;line-height:14px;font-size:9.7px;font-weight:400;color:#333333;letter-spacing:-0.378px;">GOB1010103T7</div>
<div class="t " style="left:538.8px;top:442.30px;height:14px;line-height:14px;font-size:9.7px;font-weight:400;color:#333333;letter-spacing:-0.195px;">Proveedor de gobierno municipal</div>
<div class="t " style="left:538.8px;top:459.40px;height:14px;line-height:14px;font-size:9.7px;font-weight:400;color:#333333;letter-spacing:-0.383px;">PRO0101013T5</div>
<div class="t " style="left:763.3px;top:450.70px;height:14px;line-height:14px;font-size:9.7px;font-weight:400;color:#333333;letter-spacing:0.035px;">24/02/2026</div>
<div class="t " style="left:853px;top:450.70px;height:14px;line-height:14px;font-size:9.7px;font-weight:400;color:#333333;letter-spacing:0.035px;">26/03/2026</div>
<div class="t " style="left:943px;top:450.70px;height:14px;line-height:14px;font-size:9.7px;font-weight:400;color:#333333;letter-spacing:0.035px;">24/02/2026</div>
<div class="t" style="right:772px;top:442.30px;height:14px;line-height:14px;font-size:9.7px;font-weight:400;color:#333333;letter-spacing:-0.211px;text-align:right;">$58,000.00</div>
<div class="t" style="right:772px;top:459.40px;height:14px;line-height:14px;font-size:9.7px;font-weight:400;color:#333333;letter-spacing:-0.585px;text-align:right;">MXN</div>
<div class="t" style="right:667.2px;top:442.30px;height:14px;line-height:14px;font-size:9.7px;font-weight:400;color:#333333;letter-spacing:-0.211px;text-align:right;">$58,000.00</div>
<div class="t" style="right:667.2px;top:459.40px;height:14px;line-height:14px;font-size:9.7px;font-weight:400;color:#333333;letter-spacing:-0.585px;text-align:right;">MXN</div>
<div class="t" style="right:562.3px;top:442.30px;height:14px;line-height:14px;font-size:9.7px;font-weight:400;color:#333333;letter-spacing:-0.211px;text-align:right;">$58,000.00</div>
<div class="t" style="right:562.3px;top:459.40px;height:14px;line-height:14px;font-size:9.7px;font-weight:400;color:#333333;letter-spacing:-0.585px;text-align:right;">MXN</div>
<div class="t " style="left:1353.7px;top:448.90px;height:14px;line-height:14px;font-size:9.7px;font-weight:400;color:#333333;letter-spacing:-0.296px;">En proceso de pago</div>
<div class="t " style="left:1452.6px;top:450.70px;height:14px;line-height:14px;font-size:9.7px;font-weight:400;color:#333333;letter-spacing:-0.203px;">Emisión interna</div>
<div class="t " style="left:1557.5px;top:450.70px;height:14px;line-height:14px;font-size:9.7px;font-weight:400;color:#333333;letter-spacing:0.01px;">N/A</div>
<div class="t " style="left:1662px;top:450.70px;height:14px;line-height:14px;font-size:9.7px;font-weight:400;color:#333333;letter-spacing:0.01px;">N/A</div>
<svg class="b" style="left:1799.5px;top:450.0px;color:#262626" width="10" height="11" viewBox="0 0 10 11" fill="none" stroke="currentColor"><path d="M1 0.9 H5.9 L8.7 3.7 V9.7 H1 Z" stroke-width="1" stroke-linejoin="miter"/><path d="M5.6 0.9 V3.9 H8.7" stroke-width="0.9"/><path d="M2.5 6 H6.2" stroke-width="0.9" style="opacity:.7"/></svg>
<svg class="b" style="left:1826px;top:450.5px;color:#262626" width="11" height="10" viewBox="0 0 11 10" fill="none" stroke="currentColor"><path d="M0.9 5.2 L4.1 8.6 L9.8 1" stroke-width="1"/></svg>
<svg class="b" style="left:1852.5px;top:450.5px;color:#262626" width="11" height="10" viewBox="0 0 11 10" fill="none" stroke="currentColor"><rect x="1" y="1" width="9.4" height="8.6" stroke-width="1"/><path d="M1 3.4 H10.4" stroke-width="1.1" style="opacity:.6"/><rect x="7.6" y="6.5" width="1.6" height="1.1" fill="currentColor" stroke="none"/></svg>
<div class="b" style="left:204px;top:524px;width:1670px;height:1px;background:#f0f0f0"></div>
<div class="b" style="left:213.3px;top:496.9px;width:10.5px;height:10.5px;border:1px solid #d9d9d9;border-radius:1.5px;box-sizing:border-box;background:#fff"></div>
<div class="t " style="left:239.2px;top:494.70px;height:14px;line-height:14px;font-size:9.7px;font-weight:400;color:#333333;letter-spacing:-0.295px;">I44</div>
<div class="t " style="left:313.9px;top:486.30px;height:14px;line-height:14px;font-size:9.7px;font-weight:400;color:#333333;letter-spacing:-0.219px;">Gobierno municipal prueba</div>
<div class="t " style="left:313.9px;top:503.40px;height:14px;line-height:14px;font-size:9.7px;font-weight:400;color:#333333;letter-spacing:-0.378px;">GOB1010103T7</div>
<div class="t " style="left:538.8px;top:486.30px;height:14px;line-height:14px;font-size:9.7px;font-weight:400;color:#333333;letter-spacing:-0.195px;">Proveedor de gobierno municipal</div>
<div class="t " style="left:538.8px;top:503.40px;height:14px;line-height:14px;font-size:9.7px;font-weight:400;color:#333333;letter-spacing:-0.383px;">PRO0101013T5</div>
<div class="t " style="left:763.3px;top:494.70px;height:14px;line-height:14px;font-size:9.7px;font-weight:400;color:#333333;letter-spacing:0.035px;">20/02/2026</div>
<div class="t " style="left:853px;top:494.70px;height:14px;line-height:14px;font-size:9.7px;font-weight:400;color:#333333;letter-spacing:0.035px;">22/03/2026</div>
<div class="t " style="left:943px;top:494.70px;height:14px;line-height:14px;font-size:9.7px;font-weight:400;color:#333333;letter-spacing:0.035px;">24/02/2026</div>
<div class="t" style="right:772px;top:486.30px;height:14px;line-height:14px;font-size:9.7px;font-weight:400;color:#333333;letter-spacing:-0.208px;text-align:right;">$11,600.00</div>
<div class="t" style="right:772px;top:503.40px;height:14px;line-height:14px;font-size:9.7px;font-weight:400;color:#333333;letter-spacing:-0.585px;text-align:right;">MXN</div>
<div class="t" style="right:667.2px;top:486.30px;height:14px;line-height:14px;font-size:9.7px;font-weight:400;color:#333333;letter-spacing:-0.208px;text-align:right;">$11,600.00</div>
<div class="t" style="right:667.2px;top:503.40px;height:14px;line-height:14px;font-size:9.7px;font-weight:400;color:#333333;letter-spacing:-0.585px;text-align:right;">MXN</div>
<div class="t" style="right:562.3px;top:486.30px;height:14px;line-height:14px;font-size:9.7px;font-weight:400;color:#333333;letter-spacing:-0.208px;text-align:right;">$11,600.00</div>
<div class="t" style="right:562.3px;top:503.40px;height:14px;line-height:14px;font-size:9.7px;font-weight:400;color:#333333;letter-spacing:-0.585px;text-align:right;">MXN</div>
<div class="t " style="left:1353.7px;top:492.90px;height:14px;line-height:14px;font-size:9.7px;font-weight:400;color:#333333;letter-spacing:-0.296px;">En proceso de pago</div>
<div class="t " style="left:1452.6px;top:494.70px;height:14px;line-height:14px;font-size:9.7px;font-weight:400;color:#333333;letter-spacing:-0.203px;">Emisión interna</div>
<div class="t " style="left:1557.5px;top:494.70px;height:14px;line-height:14px;font-size:9.7px;font-weight:400;color:#333333;letter-spacing:0.01px;">N/A</div>
<div class="t " style="left:1662px;top:494.70px;height:14px;line-height:14px;font-size:9.7px;font-weight:400;color:#333333;letter-spacing:0.01px;">N/A</div>
<svg class="b" style="left:1799.5px;top:494.0px;color:#262626" width="10" height="11" viewBox="0 0 10 11" fill="none" stroke="currentColor"><path d="M1 0.9 H5.9 L8.7 3.7 V9.7 H1 Z" stroke-width="1" stroke-linejoin="miter"/><path d="M5.6 0.9 V3.9 H8.7" stroke-width="0.9"/><path d="M2.5 6 H6.2" stroke-width="0.9" style="opacity:.7"/></svg>
<svg class="b" style="left:1826px;top:494.5px;color:#262626" width="11" height="10" viewBox="0 0 11 10" fill="none" stroke="currentColor"><path d="M0.9 5.2 L4.1 8.6 L9.8 1" stroke-width="1"/></svg>
<svg class="b" style="left:1852.5px;top:494.5px;color:#262626" width="11" height="10" viewBox="0 0 11 10" fill="none" stroke="currentColor"><rect x="1" y="1" width="9.4" height="8.6" stroke-width="1"/><path d="M1 3.4 H10.4" stroke-width="1.1" style="opacity:.6"/><rect x="7.6" y="6.5" width="1.6" height="1.1" fill="currentColor" stroke="none"/></svg>
<div class="b" style="left:204px;top:567px;width:1670px;height:1px;background:#f0f0f0"></div>
<div class="b" style="left:213.3px;top:540.4px;width:10.5px;height:10.5px;border:1px solid #d9d9d9;border-radius:1.5px;box-sizing:border-box;background:#fff"></div>
<div class="t " style="left:239.2px;top:538.20px;height:14px;line-height:14px;font-size:9.7px;font-weight:400;color:#333333;letter-spacing:-0.295px;">I46</div>
<div class="t " style="left:313.9px;top:529.80px;height:14px;line-height:14px;font-size:9.7px;font-weight:400;color:#333333;letter-spacing:-0.219px;">Gobierno municipal prueba</div>
<div class="t " style="left:313.9px;top:546.90px;height:14px;line-height:14px;font-size:9.7px;font-weight:400;color:#333333;letter-spacing:-0.378px;">GOB1010103T7</div>
<div class="t " style="left:538.8px;top:529.80px;height:14px;line-height:14px;font-size:9.7px;font-weight:400;color:#333333;letter-spacing:-0.195px;">Proveedor de gobierno municipal</div>
<div class="t " style="left:538.8px;top:546.90px;height:14px;line-height:14px;font-size:9.7px;font-weight:400;color:#333333;letter-spacing:-0.383px;">PRO0101013T5</div>
<div class="t " style="left:763.3px;top:538.20px;height:14px;line-height:14px;font-size:9.7px;font-weight:400;color:#333333;letter-spacing:0.035px;">24/02/2026</div>
<div class="t " style="left:853px;top:538.20px;height:14px;line-height:14px;font-size:9.7px;font-weight:400;color:#333333;letter-spacing:0.035px;">26/03/2026</div>
<div class="t " style="left:943px;top:538.20px;height:14px;line-height:14px;font-size:9.7px;font-weight:400;color:#333333;letter-spacing:0.035px;">24/02/2026</div>
<div class="t" style="right:772px;top:529.80px;height:14px;line-height:14px;font-size:9.7px;font-weight:400;color:#333333;letter-spacing:-0.211px;text-align:right;">$23,200.00</div>
<div class="t" style="right:772px;top:546.90px;height:14px;line-height:14px;font-size:9.7px;font-weight:400;color:#333333;letter-spacing:-0.585px;text-align:right;">MXN</div>
<div class="t" style="right:667.2px;top:529.80px;height:14px;line-height:14px;font-size:9.7px;font-weight:400;color:#333333;letter-spacing:-0.211px;text-align:right;">$23,200.00</div>
<div class="t" style="right:667.2px;top:546.90px;height:14px;line-height:14px;font-size:9.7px;font-weight:400;color:#333333;letter-spacing:-0.585px;text-align:right;">MXN</div>
<div class="t" style="right:562.3px;top:529.80px;height:14px;line-height:14px;font-size:9.7px;font-weight:400;color:#333333;letter-spacing:-0.211px;text-align:right;">$23,200.00</div>
<div class="t" style="right:562.3px;top:546.90px;height:14px;line-height:14px;font-size:9.7px;font-weight:400;color:#333333;letter-spacing:-0.585px;text-align:right;">MXN</div>
<div class="t " style="left:1353.7px;top:536.40px;height:14px;line-height:14px;font-size:9.7px;font-weight:400;color:#333333;letter-spacing:-0.296px;">En proceso de pago</div>
<div class="t " style="left:1452.6px;top:538.20px;height:14px;line-height:14px;font-size:9.7px;font-weight:400;color:#333333;letter-spacing:-0.203px;">Emisión interna</div>
<div class="t " style="left:1557.5px;top:538.20px;height:14px;line-height:14px;font-size:9.7px;font-weight:400;color:#333333;letter-spacing:0.01px;">N/A</div>
<div class="t " style="left:1662px;top:538.20px;height:14px;line-height:14px;font-size:9.7px;font-weight:400;color:#333333;letter-spacing:0.01px;">N/A</div>
<svg class="b" style="left:1799.5px;top:537.5px;color:#262626" width="10" height="11" viewBox="0 0 10 11" fill="none" stroke="currentColor"><path d="M1 0.9 H5.9 L8.7 3.7 V9.7 H1 Z" stroke-width="1" stroke-linejoin="miter"/><path d="M5.6 0.9 V3.9 H8.7" stroke-width="0.9"/><path d="M2.5 6 H6.2" stroke-width="0.9" style="opacity:.7"/></svg>
<svg class="b" style="left:1826px;top:538.0px;color:#262626" width="11" height="10" viewBox="0 0 11 10" fill="none" stroke="currentColor"><path d="M0.9 5.2 L4.1 8.6 L9.8 1" stroke-width="1"/></svg>
<svg class="b" style="left:1852.5px;top:538.0px;color:#262626" width="11" height="10" viewBox="0 0 11 10" fill="none" stroke="currentColor"><rect x="1" y="1" width="9.4" height="8.6" stroke-width="1"/><path d="M1 3.4 H10.4" stroke-width="1.1" style="opacity:.6"/><rect x="7.6" y="6.5" width="1.6" height="1.1" fill="currentColor" stroke="none"/></svg>
<div class="b" style="left:204px;top:611px;width:1670px;height:1px;background:#f0f0f0"></div>
<div class="b" style="left:213.3px;top:583.9px;width:10.5px;height:10.5px;border:1px solid #d9d9d9;border-radius:1.5px;box-sizing:border-box;background:#fff"></div>
<div class="t " style="left:239.2px;top:581.70px;height:14px;line-height:14px;font-size:9.7px;font-weight:400;color:#333333;letter-spacing:-0.295px;">I47</div>
<div class="t " style="left:313.9px;top:573.30px;height:14px;line-height:14px;font-size:9.7px;font-weight:400;color:#333333;letter-spacing:-0.219px;">Gobierno municipal prueba</div>
<div class="t " style="left:313.9px;top:590.40px;height:14px;line-height:14px;font-size:9.7px;font-weight:400;color:#333333;letter-spacing:-0.378px;">GOB1010103T7</div>
<div class="t " style="left:538.8px;top:573.30px;height:14px;line-height:14px;font-size:9.7px;font-weight:400;color:#333333;letter-spacing:-0.195px;">Proveedor de gobierno municipal</div>
<div class="t " style="left:538.8px;top:590.40px;height:14px;line-height:14px;font-size:9.7px;font-weight:400;color:#333333;letter-spacing:-0.383px;">PRO0101013T5</div>
<div class="t " style="left:763.3px;top:581.70px;height:14px;line-height:14px;font-size:9.7px;font-weight:400;color:#333333;letter-spacing:0.035px;">24/02/2026</div>
<div class="t " style="left:853px;top:581.70px;height:14px;line-height:14px;font-size:9.7px;font-weight:400;color:#333333;letter-spacing:0.035px;">26/03/2026</div>
<div class="t " style="left:943px;top:581.70px;height:14px;line-height:14px;font-size:9.7px;font-weight:400;color:#333333;letter-spacing:0.035px;">26/03/2026</div>
<div class="t" style="right:772px;top:573.30px;height:14px;line-height:14px;font-size:9.7px;font-weight:400;color:#333333;letter-spacing:-0.211px;text-align:right;">$34,800.00</div>
<div class="t" style="right:772px;top:590.40px;height:14px;line-height:14px;font-size:9.7px;font-weight:400;color:#333333;letter-spacing:-0.585px;text-align:right;">MXN</div>
<div class="t" style="right:667.2px;top:573.30px;height:14px;line-height:14px;font-size:9.7px;font-weight:400;color:#333333;letter-spacing:-0.211px;text-align:right;">$34,800.00</div>
<div class="t" style="right:667.2px;top:590.40px;height:14px;line-height:14px;font-size:9.7px;font-weight:400;color:#333333;letter-spacing:-0.585px;text-align:right;">MXN</div>
<div class="t" style="right:562.3px;top:573.30px;height:14px;line-height:14px;font-size:9.7px;font-weight:400;color:#333333;letter-spacing:-0.211px;text-align:right;">$34,800.00</div>
<div class="t" style="right:562.3px;top:590.40px;height:14px;line-height:14px;font-size:9.7px;font-weight:400;color:#333333;letter-spacing:-0.585px;text-align:right;">MXN</div>
<div class="t " style="left:1353.7px;top:579.90px;height:14px;line-height:14px;font-size:9.7px;font-weight:400;color:#333333;letter-spacing:-0.296px;">En proceso de pago</div>
<div class="t " style="left:1452.6px;top:581.70px;height:14px;line-height:14px;font-size:9.7px;font-weight:400;color:#333333;letter-spacing:-0.203px;">Emisión interna</div>
<div class="t " style="left:1557.5px;top:581.70px;height:14px;line-height:14px;font-size:9.7px;font-weight:400;color:#333333;letter-spacing:0.01px;">N/A</div>
<div class="t " style="left:1662px;top:581.70px;height:14px;line-height:14px;font-size:9.7px;font-weight:400;color:#333333;letter-spacing:0.01px;">N/A</div>
<svg class="b" style="left:1799.5px;top:581.0px;color:#262626" width="10" height="11" viewBox="0 0 10 11" fill="none" stroke="currentColor"><path d="M1 0.9 H5.9 L8.7 3.7 V9.7 H1 Z" stroke-width="1" stroke-linejoin="miter"/><path d="M5.6 0.9 V3.9 H8.7" stroke-width="0.9"/><path d="M2.5 6 H6.2" stroke-width="0.9" style="opacity:.7"/></svg>
<svg class="b" style="left:1826px;top:581.5px;color:#262626" width="11" height="10" viewBox="0 0 11 10" fill="none" stroke="currentColor"><path d="M0.9 5.2 L4.1 8.6 L9.8 1" stroke-width="1"/></svg>
<svg class="b" style="left:1852.5px;top:581.5px;color:#262626" width="11" height="10" viewBox="0 0 11 10" fill="none" stroke="currentColor"><rect x="1" y="1" width="9.4" height="8.6" stroke-width="1"/><path d="M1 3.4 H10.4" stroke-width="1.1" style="opacity:.6"/><rect x="7.6" y="6.5" width="1.6" height="1.1" fill="currentColor" stroke="none"/></svg>
<div class="b" style="left:204px;top:655px;width:1670px;height:1px;background:#f0f0f0"></div>
<div class="b" style="left:213.3px;top:627.9px;width:10.5px;height:10.5px;border:1px solid #d9d9d9;border-radius:1.5px;box-sizing:border-box;background:#fff"></div>
<div class="t " style="left:239.2px;top:625.70px;height:14px;line-height:14px;font-size:9.7px;font-weight:400;color:#333333;letter-spacing:-0.295px;">I41</div>
<div class="t " style="left:313.9px;top:617.30px;height:14px;line-height:14px;font-size:9.7px;font-weight:400;color:#333333;letter-spacing:-0.219px;">Gobierno municipal prueba</div>
<div class="t " style="left:313.9px;top:634.40px;height:14px;line-height:14px;font-size:9.7px;font-weight:400;color:#333333;letter-spacing:-0.378px;">GOB1010103T7</div>
<div class="t " style="left:538.8px;top:617.30px;height:14px;line-height:14px;font-size:9.7px;font-weight:400;color:#333333;letter-spacing:-0.195px;">Proveedor de gobierno municipal</div>
<div class="t " style="left:538.8px;top:634.40px;height:14px;line-height:14px;font-size:9.7px;font-weight:400;color:#333333;letter-spacing:-0.383px;">PRO0101013T5</div>
<div class="t " style="left:763.3px;top:625.70px;height:14px;line-height:14px;font-size:9.7px;font-weight:400;color:#333333;letter-spacing:0.035px;">13/02/2026</div>
<div class="t " style="left:853px;top:625.70px;height:14px;line-height:14px;font-size:9.7px;font-weight:400;color:#333333;letter-spacing:0.035px;">15/03/2026</div>
<div class="t " style="left:943px;top:625.70px;height:14px;line-height:14px;font-size:9.7px;font-weight:400;color:#333333;letter-spacing:0.035px;">15/03/2026</div>
<div class="t" style="right:772px;top:617.30px;height:14px;line-height:14px;font-size:9.7px;font-weight:400;color:#333333;letter-spacing:-0.213px;text-align:right;">$185,600.00</div>
<div class="t" style="right:772px;top:634.40px;height:14px;line-height:14px;font-size:9.7px;font-weight:400;color:#333333;letter-spacing:-0.585px;text-align:right;">MXN</div>
<div class="t" style="right:667.2px;top:617.30px;height:14px;line-height:14px;font-size:9.7px;font-weight:400;color:#333333;letter-spacing:-0.213px;text-align:right;">$185,600.00</div>
<div class="t" style="right:667.2px;top:634.40px;height:14px;line-height:14px;font-size:9.7px;font-weight:400;color:#333333;letter-spacing:-0.585px;text-align:right;">MXN</div>
<div class="t" style="right:562.3px;top:617.30px;height:14px;line-height:14px;font-size:9.7px;font-weight:400;color:#333333;letter-spacing:-0.213px;text-align:right;">$185,600.00</div>
<div class="t" style="right:562.3px;top:634.40px;height:14px;line-height:14px;font-size:9.7px;font-weight:400;color:#333333;letter-spacing:-0.585px;text-align:right;">MXN</div>
<div class="t " style="left:1353.7px;top:623.90px;height:14px;line-height:14px;font-size:9.7px;font-weight:400;color:#333333;letter-spacing:-0.296px;">En proceso de pago</div>
<div class="t " style="left:1452.6px;top:625.70px;height:14px;line-height:14px;font-size:9.7px;font-weight:400;color:#333333;letter-spacing:-0.203px;">Emisión interna</div>
<div class="t " style="left:1557.5px;top:625.70px;height:14px;line-height:14px;font-size:9.7px;font-weight:400;color:#333333;letter-spacing:0.01px;">N/A</div>
<div class="t " style="left:1662px;top:625.70px;height:14px;line-height:14px;font-size:9.7px;font-weight:400;color:#333333;letter-spacing:0.01px;">N/A</div>
<svg class="b" style="left:1799.5px;top:625.0px;color:#262626" width="10" height="11" viewBox="0 0 10 11" fill="none" stroke="currentColor"><path d="M1 0.9 H5.9 L8.7 3.7 V9.7 H1 Z" stroke-width="1" stroke-linejoin="miter"/><path d="M5.6 0.9 V3.9 H8.7" stroke-width="0.9"/><path d="M2.5 6 H6.2" stroke-width="0.9" style="opacity:.7"/></svg>
<svg class="b" style="left:1826px;top:625.5px;color:#262626" width="11" height="10" viewBox="0 0 11 10" fill="none" stroke="currentColor"><path d="M0.9 5.2 L4.1 8.6 L9.8 1" stroke-width="1"/></svg>
<svg class="b" style="left:1852.5px;top:625.5px;color:#262626" width="11" height="10" viewBox="0 0 11 10" fill="none" stroke="currentColor"><rect x="1" y="1" width="9.4" height="8.6" stroke-width="1"/><path d="M1 3.4 H10.4" stroke-width="1.1" style="opacity:.6"/><rect x="7.6" y="6.5" width="1.6" height="1.1" fill="currentColor" stroke="none"/></svg>
<svg class="b" style="left:1756px;top:670.5px;color:#bfbfbf" width="5" height="7" viewBox="0 0 5 7" fill="none" stroke="currentColor"><path d="M4.2 0.6 L1 3.5 L4.2 6.4" stroke-width="0.8"/></svg>
<div class="b" style="left:1766px;top:666px;width:16px;height:16px;border:1px solid #1890ff;border-radius:2px;box-sizing:border-box;background:#fff"></div>
<div class="t" style="left:1474px;width:600px;text-align:center;top:667.30px;height:14px;line-height:14px;font-size:9.5px;font-weight:400;color:#1890ff;letter-spacing:0px;">1</div>
<svg class="b" style="left:1788px;top:670.5px;color:#bfbfbf" width="5" height="7" viewBox="0 0 5 7" fill="none" stroke="currentColor"><path d="M0.8 0.6 L4 3.5 L0.8 6.4" stroke-width="0.8"/></svg>
<div class="b" style="left:1799px;top:666px;width:75px;height:16px;border:1px solid #d9d9d9;border-radius:2px;box-sizing:border-box;background:#fff"></div>
<div class="t " style="left:1805.3px;top:667.20px;height:14px;line-height:14px;font-size:9.7px;font-weight:400;color:#333;letter-spacing:-0.262px;">10 / página</div>
<svg class="b" style="left:1860px;top:672px;color:#bfbfbf" width="7" height="5" viewBox="0 0 7 5" fill="none" stroke="currentColor"><path d="M0.5 0.8 L3.5 4 L6.5 0.8" stroke-width="0.8"/></svg>
</body></html>
